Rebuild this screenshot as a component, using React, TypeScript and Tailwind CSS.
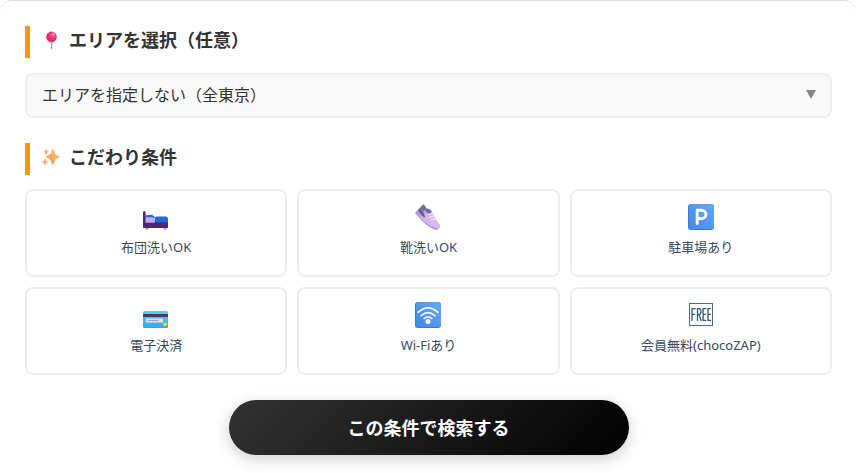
import { useState } from 'react';
import type { ReactNode } from 'react';

function PinIcon() {
  return (
    <svg viewBox="0 0 18 18" className="h-[18px] w-[18px]" aria-hidden="true">
      <defs>
        <radialGradient id="pinHead" cx="0.62" cy="0.3" r="0.7">
          <stop offset="0" stopColor="#ff6f9d" />
          <stop offset="0.45" stopColor="#f9317a" />
          <stop offset="1" stopColor="#d42a62" />
        </radialGradient>
      </defs>
      <rect x="8.9" y="9" width="1.3" height="9" rx="0.5" fill="#9b93a3" />
      <circle cx="9.5" cy="5.9" r="5.3" fill="url(#pinHead)" />
      <ellipse cx="11.5" cy="3.7" rx="1.4" ry="1.1" fill="#ffabc6" />
    </svg>
  );
}

function SparklesIcon() {
  return (
    <svg viewBox="0 0 18 18" className="h-[18px] w-[18px]" aria-hidden="true">
      <defs>
        <linearGradient id="spark" x1="0" y1="1" x2="1" y2="0">
          <stop offset="0" stopColor="#ff8173" />
          <stop offset="0.5" stopColor="#ffad5c" />
          <stop offset="1" stopColor="#ffca62" />
        </linearGradient>
      </defs>
      <g fill="url(#spark)">
        <path d="M10.8 1.2Q11.4 1.2 11.7 2.2L13 5.2Q13.5 6.6 14.7 7L17.2 8Q18.2 8.8 17.2 9.6L14.7 10.6Q13.5 11 13 12.4L11.7 15.8Q10.8 17.6 10 15.8L8.7 12.4Q8.2 11 6.8 10.6L4.7 9.6Q3.8 8.8 4.7 8L6.8 7Q8.2 6.6 8.7 5.2L10 2.2Q10.3 1.2 10.8 1.2Z" />
        <path d="M4.2 .6L5.2 2.7L7.2 3.8L5.2 4.8L4.2 6.9L3.2 4.8L1.2 3.8L3.2 2.7Z" />
        <path d="M3 10.3L4.1 12.8L6.2 13.9L4.1 15L3 17.4L1.9 15L0 13.9L1.9 12.8Z" />
      </g>
    </svg>
  );
}

function BedIcon() {
  return (
    <svg viewBox="0 0 26 26" className="h-[26px] w-[26px]" aria-hidden="true">
      <path d="M2.5 23.5h3v1a1.5 1.5 0 0 1-3 0zM20.5 23.5h3v1a1.5 1.5 0 0 1-3 0z" fill="#b99be8" />
      <path d="M2.5 11.2L9 10.8q2.5 1.2 3.5 3.2H2.5z" fill="#1d72dc" />
      <path d="M2.5 13.2h7q2.5.5 2.5 6H2.5z" fill="#c2a7e8" />
      <path d="M11.8 14.5q0-2 2-2h9q2.2 0 2.2 2.2V19H11.8z" fill="#216bd5" />
      <path d="M12 17.8h13V19H12z" fill="#2454b8" />
      <path d="M0 8.5a1.3 1.3 0 0 1 2.6 0V18.8H25v4.5q0 .8-.8.8H.8q-.8 0-.8-.8z" fill="#4a2770" />
    </svg>
  );
}

function ShoeIcon() {
  return (
    <svg viewBox="0 0 26 26" className="h-[26px] w-[26px]" aria-hidden="true">
      <defs>
        <linearGradient id="shoe" x1="0" y1="0" x2="1" y2="1">
          <stop offset="0" stopColor="#a48cc4" />
          <stop offset="0.5" stopColor="#d0b8ec" />
          <stop offset="1" stopColor="#d9baf0" />
        </linearGradient>
      </defs>
      <path d="M1 7.8L7.5.8Q9 0 9.8 1.8L11.6 4.6Q16 3.8 17.2 8.2L20.4 14.4L24.6 20.4Q26 23.5 23.6 25.2Q21 26.5 17.2 24.6Q11 20.6 6.5 16.2L1 10Q0 8.8 1 7.8Z" fill="url(#shoe)" />
      <path d="M4.5 5L8 .9Q9.2.5 9.8 1.8L11.3 4.6L8.8 7.8Z" fill="#77717f" />
      <path d="M3 6.3L4.7 4.5L8.8 9L10.2 13.6Q6.5 12.6 3 6.3Z" fill="#6656a6" />
      <path d="M10.8 4.8Q15.3 4 16.4 8.3L14 9.8L10.4 7.2Z" fill="#7464ad" />
      <path d="M1 8.2Q5 15 11.5 19.3Q17 24 23.8 24.6Q21 26.4 17.2 24.6Q11 20.6 6.5 16.2L1 10Q.3 9 1 8.2Z" fill="#b68ed8" />
      <path d="M13 10.8l4.6-1.6M14.4 13.4l4.7-1.5M16 16l4.6-1.4" stroke="#f0e6fa" strokeWidth="1.2" strokeLinecap="round" />
    </svg>
  );
}

function BlueTile({ id, children }: { id: string; children: ReactNode }) {
  return (
    <svg viewBox="0 0 26 26" className="h-[26px] w-[26px]" aria-hidden="true">
      <defs>
        <linearGradient id={id} x1="0" y1="1" x2="1" y2="0">
          <stop offset="0" stopColor="#4387e6" />
          <stop offset="1" stopColor="#62aaf8" />
        </linearGradient>
      </defs>
      <rect width="26" height="26" rx="3" fill="#3f79cf" />
      <rect x="1" width="25" height="25" rx="3" fill={`url(#${id})`} />
      {children}
    </svg>
  );
}

function ParkingIcon() {
  return (
    <BlueTile id="parkingTile">
      <path d="M9.2 19.5V6.3h4.6a4.1 4.1 0 0 1 0 8.2H9.2" fill="none" stroke="#fff" strokeWidth="2.9" strokeLinecap="round" strokeLinejoin="round" />
    </BlueTile>
  );
}

function WifiIcon() {
  return (
    <BlueTile id="wifiTile">
      <g fill="none" stroke="#f5f8ff" strokeWidth="1.8" strokeLinecap="round">
        <path d="M3 10.4q10-9 20 0" />
        <path d="M6.2 13.6q6.8-6 13.6 0" />
        <path d="M9.3 16.4q3.7-3 7.4 0" />
      </g>
      <circle cx="13" cy="19.4" r="2.5" fill="#fff" />
    </BlueTile>
  );
}

function CardIcon() {
  return (
    <svg viewBox="0 0 26 26" className="h-[26px] w-[26px]" aria-hidden="true">
      <defs>
        <linearGradient id="credit" x1="0" y1="0" x2="0" y2="1">
          <stop offset="0" stopColor="#50d5f2" />
          <stop offset="1" stopColor="#38a4e6" />
        </linearGradient>
      </defs>
      <rect y="9" width="25" height="17" rx="1.5" fill="url(#credit)" />
      <rect y="12" width="25" height="3" fill="#463e58" />
      <rect x="3" y="16.5" width="17" height="4" rx="0.5" fill="#dce1ee" />
      <path d="M4.5 18.5h11" stroke="#aaa3b2" strokeWidth="1" />
      <circle cx="22" cy="22.2" r="2" fill="#f3c93f" />
    </svg>
  );
}

function FreeIcon() {
  return (
    <svg viewBox="0 0 26 26" className="h-[26px] w-[26px]" aria-hidden="true">
      <rect x="1.5" y="1.5" width="23" height="22" fill="none" stroke="#466f8e" />
      <g fill="none" stroke="#34566f" strokeWidth="1.3">
        <path d="M4 19V6.6h3.6M4 12.3h3" />
        <path d="M9.5 19V6.6h1.3q2.2 0 2.2 3t-2.2 3H9.5M11 12.6l2.3 6.4" />
        <path d="M18.3 6.6h-3.2v11.8h3.2M15.1 12.3H18" />
        <path d="M23 6.6h-3v11.8h3M20 12.3h2.8" />
      </g>
    </svg>
  );
}

const conditions = [
  { id: 'futon', label: '布団洗いOK', icon: <BedIcon /> },
  { id: 'shoes', label: '靴洗いOK', icon: <ShoeIcon /> },
  { id: 'parking', label: '駐車場あり', icon: <ParkingIcon /> },
  { id: 'cashless', label: '電子決済', icon: <CardIcon /> },
  { id: 'wifi', label: 'Wi-Fiあり', icon: <WifiIcon /> },
  { id: 'member', label: '会員無料(chocoZAP)', icon: <FreeIcon /> },
];

function SectionTitle({ icon, children }: { icon: ReactNode; children: ReactNode }) {
  return (
    <h2 className="flex items-center gap-[9px] border-l-5 border-[#ff9800] pb-1 pl-3 text-lg font-bold text-[#333]">
      {icon}
      {children}
    </h2>
  );
}

export default function App() {
  const [selected, setSelected] = useState<string[]>([]);

  const toggle = (id: string) =>
    setSelected((ids) => (ids.includes(id) ? ids.filter((i) => i !== id) : [...ids, id]));

  return (
    <form
      className="rounded-t-xl border-t border-[#ddd] bg-white pt-[25px] pr-6 pb-5 pl-[25px] font-['Noto_Sans','Noto_Sans_CJK_JP',sans-serif] text-[#333]"
      onSubmit={(e) => e.preventDefault()}
    >
      <SectionTitle icon={<PinIcon />}>
        <label htmlFor="area">エリアを選択（任意）</label>
      </SectionTitle>
      <div className="relative mt-[15px]">
        <select
          id="area"
          className="h-[45px] w-full appearance-none rounded-lg border-2 border-[#eee] bg-[#f9f9f9] px-[15px] pb-0.5 text-base text-[#333]"
        >
          <option>エリアを指定しない（全東京）</option>
        </select>
        <svg viewBox="0 0 10 9" className="pointer-events-none absolute top-[17px] right-4 h-[9px] w-[10px]" aria-hidden="true">
          <path d="M0 0h10L5 9z" fill="#888" />
        </svg>
      </div>

      <div className="mt-[25px]">
        <SectionTitle icon={<SparklesIcon />}>こだわり条件</SectionTitle>
      </div>
      <div className="mt-3.5 grid grid-cols-3 gap-[10px]">
        {conditions.map(({ id, label, icon }) => (
          <label
            key={id}
            className="flex h-[88px] cursor-pointer flex-col items-center rounded-lg border-2 border-[#eee] bg-white pt-[13px] has-checked:border-[#ff9800] has-checked:bg-[#fff8ec]"
          >
            <input
              type="checkbox"
              className="sr-only"
              checked={selected.includes(id)}
              onChange={() => toggle(id)}
            />
            {icon}
            <span className="mt-[7px] text-[13px] leading-5 text-[#34495e]">{label}</span>
          </label>
        ))}
      </div>

      <button
        type="submit"
        className="mx-auto mt-[25px] block h-[55px] w-full max-w-[400px] rounded-full bg-[linear-gradient(135deg,#333,#000)] text-lg font-bold text-white shadow-[0_4px_15px_rgba(0,0,0,0.2)]"
      >
        この条件で検索する
      </button>
    </form>
  );
}
